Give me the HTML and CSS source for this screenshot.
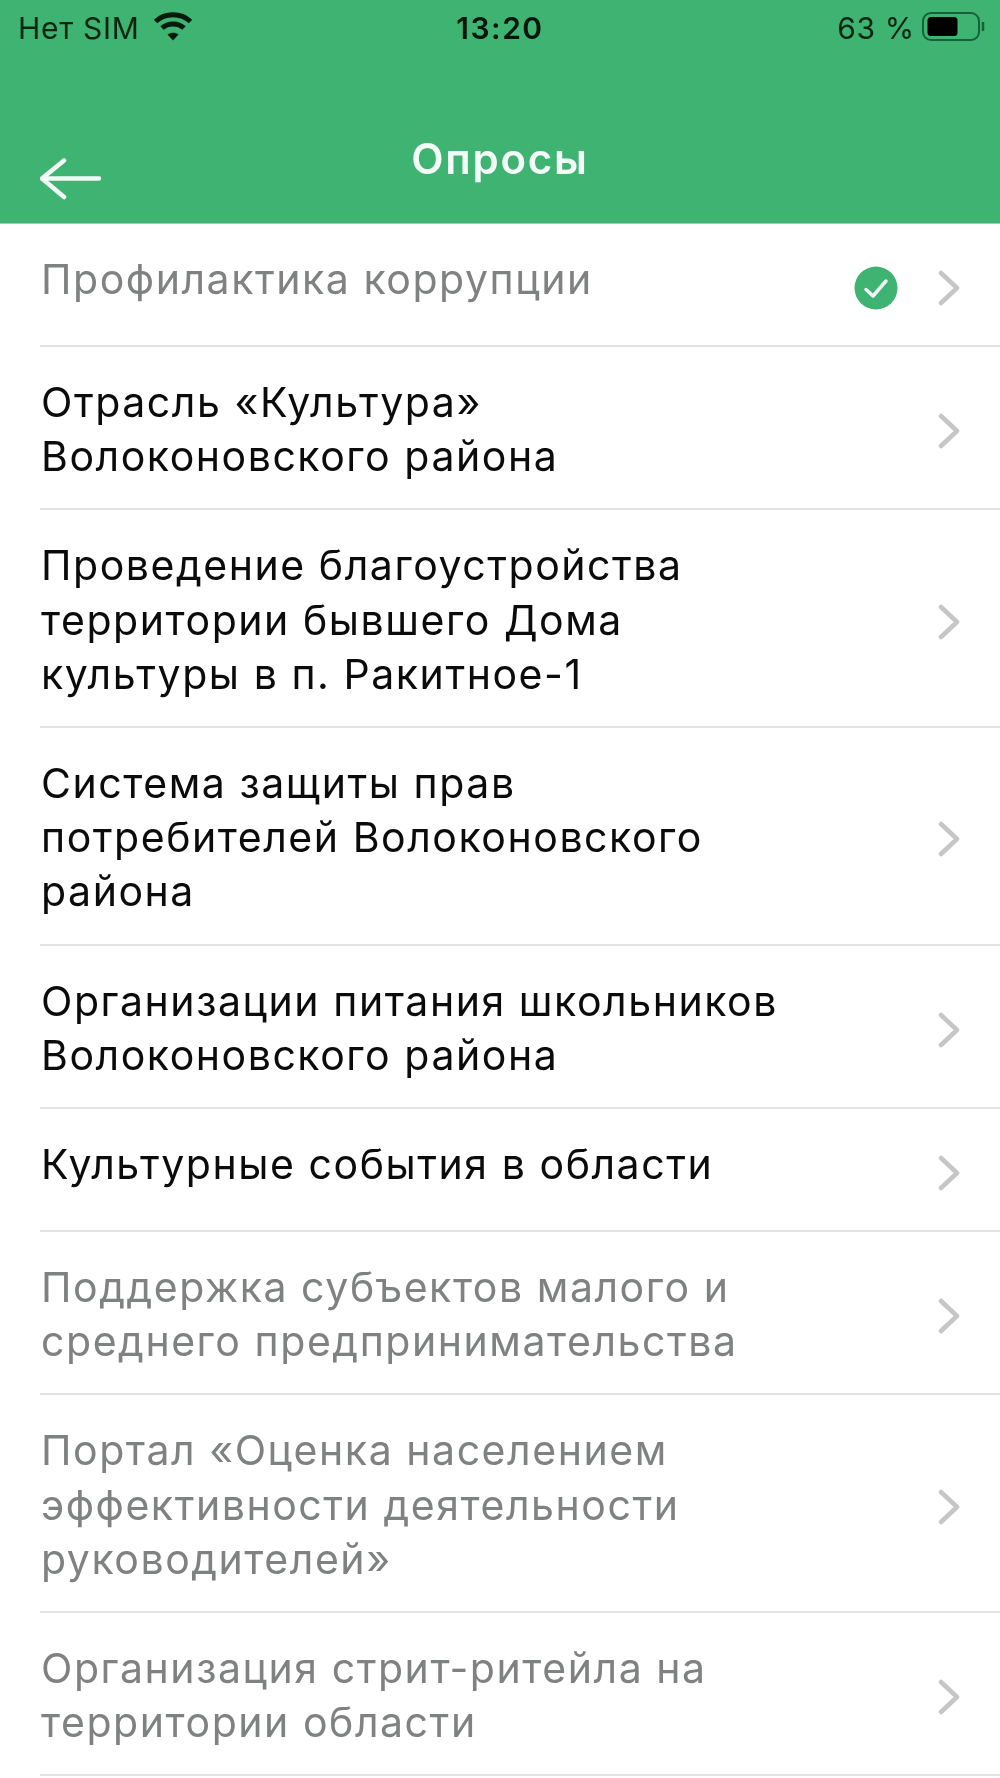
FILE: index.html
```html
<!DOCTYPE html>
<html lang="ru">
<head>
<meta charset="utf-8">
<title>Опросы</title>
<link rel="stylesheet" href="styles.css">
</head>
<body>
<header class="header">
  <div class="status">
    <div class="status-left">
      <span class="status-label">Нет SIM</span>
      <svg class="wifi" viewBox="0 0 40 30"><path d="M2.500 10.500C12 1.500 28 1.500 37.500 10.500" /><path d="M9 17C15 11.500 25 11.500 31 17" /><path class="dot" d="M20 29.500L14.500 23.500C17.500 21 22.500 21 25.500 23.500Z"/></svg>
    </div>
    <div class="status-time">13:20</div>
    <div class="status-right">
      <span class="status-label">63 %</span>
      <svg class="battery" viewBox="0 0 64 32"><rect x="1" y="2" width="56" height="27" rx="8" class="batt-shell"/><rect x="5.500" y="6" width="30" height="19" rx="3.500" class="batt-fill"/><path d="M61 11V20" class="batt-cap"/></svg>
    </div>
  </div>
  <div class="nav">
    <svg class="back" viewBox="0 0 62 42"><path d="M59 20.500H2M24 2.500L2 20.500L24 39"/></svg>
    <h1 class="title">Опросы</h1>
    <span class="nav-spacer"></span>
  </div>
</header>
<main class="list">
  <a class="row done"><span class="row-text">Профилактика коррупции</span>
    <svg class="check" viewBox="0 0 44 44"><circle cx="22" cy="22" r="21.500"/><path d="M12 23.500L19 30L32 15"/></svg>
    <svg class="chev" viewBox="0 0 22 36"><path d="M3 3L19 18L3 33"/></svg></a>
  <a class="row"><span class="row-text">Отрасль «Культура»<br>Волоконовского района</span>
    <svg class="chev" viewBox="0 0 22 36"><path d="M3 3L19 18L3 33"/></svg></a>
  <a class="row"><span class="row-text">Проведение благоустройства<br>территории бывшего Дома<br>культуры в п. Ракитное-1</span>
    <svg class="chev" viewBox="0 0 22 36"><path d="M3 3L19 18L3 33"/></svg></a>
  <a class="row"><span class="row-text">Система защиты прав<br>потребителей Волоконовского<br>района</span>
    <svg class="chev" viewBox="0 0 22 36"><path d="M3 3L19 18L3 33"/></svg></a>
  <a class="row"><span class="row-text">Организации питания школьников<br>Волоконовского района</span>
    <svg class="chev" viewBox="0 0 22 36"><path d="M3 3L19 18L3 33"/></svg></a>
  <a class="row"><span class="row-text">Культурные события в области</span>
    <svg class="chev" viewBox="0 0 22 36"><path d="M3 3L19 18L3 33"/></svg></a>
  <a class="row done"><span class="row-text">Поддержка субъектов малого и<br>среднего предпринимательства</span>
    <svg class="chev" viewBox="0 0 22 36"><path d="M3 3L19 18L3 33"/></svg></a>
  <a class="row done"><span class="row-text">Портал «Оценка населением<br>эффективности деятельности<br>руководителей»</span>
    <svg class="chev" viewBox="0 0 22 36"><path d="M3 3L19 18L3 33"/></svg></a>
  <a class="row done"><span class="row-text">Организация стрит-ритейла на<br>территории области</span>
    <svg class="chev" viewBox="0 0 22 36"><path d="M3 3L19 18L3 33"/></svg></a>
</main>
</body>
</html>
```
FILE: styles.css
```css
* { box-sizing: border-box; }
html, body { margin: 0; padding: 0; }
body {
  width: 1000px;
  height: 1778px;
  overflow: hidden;
  background: #fff;
  font-family: "Inter", "Liberation Sans", sans-serif;
  color: #0a0a0a;
}
.header {
  height: 224px;
  background: #3eb372;
  display: flex;
  flex-direction: column;
  border-bottom: 1px solid #a9c9b6;
  filter: blur(0.5px);
}
.status {
  height: 56px;
  padding: 0 18px;
  display: grid;
  grid-template-columns: 1fr auto 1fr;
  align-items: center;
  font-size: 30px;
  color: #07240f;
}
.status-label { letter-spacing: 0.700px; }
.status-left { display: flex; align-items: center; gap: 13px; }
.status-time { font-weight: 600; color: #06150c; letter-spacing: 1.500px; }
.status-right { display: flex; align-items: center; justify-content: flex-end; gap: 7px; }
.wifi { width: 40px; height: 30px; fill: none; stroke: #041a0b; stroke-width: 5; margin-top: -4px; }
.wifi .dot { fill: #041a0b; stroke: none; }
.battery { width: 64px; height: 32px; margin-right: -4px; margin-top: -2px; }
.batt-shell { fill: none; stroke: #146235; stroke-width: 2; }
.batt-fill { fill: #000; }
.batt-cap { stroke: #146235; stroke-width: 2.500; fill: none; }
.nav {
  flex: 1;
  display: grid;
  grid-template-columns: 1fr auto 1fr;
  padding: 0 40px;
  align-items: start;
}
.back { width: 62px; height: 42px; margin-top: 102px; fill: none; stroke: #f2fbf6; stroke-width: 4.500; stroke-linecap: round; stroke-linejoin: round; }
.title {
  margin: 81px 0 0;
  font-size: 42px;
  line-height: 44px;
  letter-spacing: 1.800px;
  font-weight: 600;
  color: #f3fcf7;
}
.nav-spacer { display: block; }
.list { padding-left: 40px; filter: blur(0.5px); }
.row {
  display: flex;
  align-items: center;
  min-height: 123px;
  padding: 28px 40px 25px 1px;
  border-bottom: 2px solid #e3e3e3;
  font-size: 41px;
  letter-spacing: 1.550px;
  line-height: 54.200px;
  color: #0b0b0b;
}
.row-text { flex: 1; align-self: flex-start; }
.done .row-text { color: #7f8280; }
.chev {
  width: 22px;
  height: 36px;
  margin-top: 4px;
  fill: none;
  stroke: #c6c6c6;
  stroke-width: 4.500;
  stroke-linecap: round;
  stroke-linejoin: round;
  flex: none;
}
.check {
  width: 44px;
  height: 44px;
  margin-top: 4px;
  margin-right: 40px;
  flex: none;
}
.check circle { fill: #3eb372; }
.check path { fill: none; stroke: #eef9f2; stroke-width: 3.500; stroke-linecap: round; stroke-linejoin: round; }
```
